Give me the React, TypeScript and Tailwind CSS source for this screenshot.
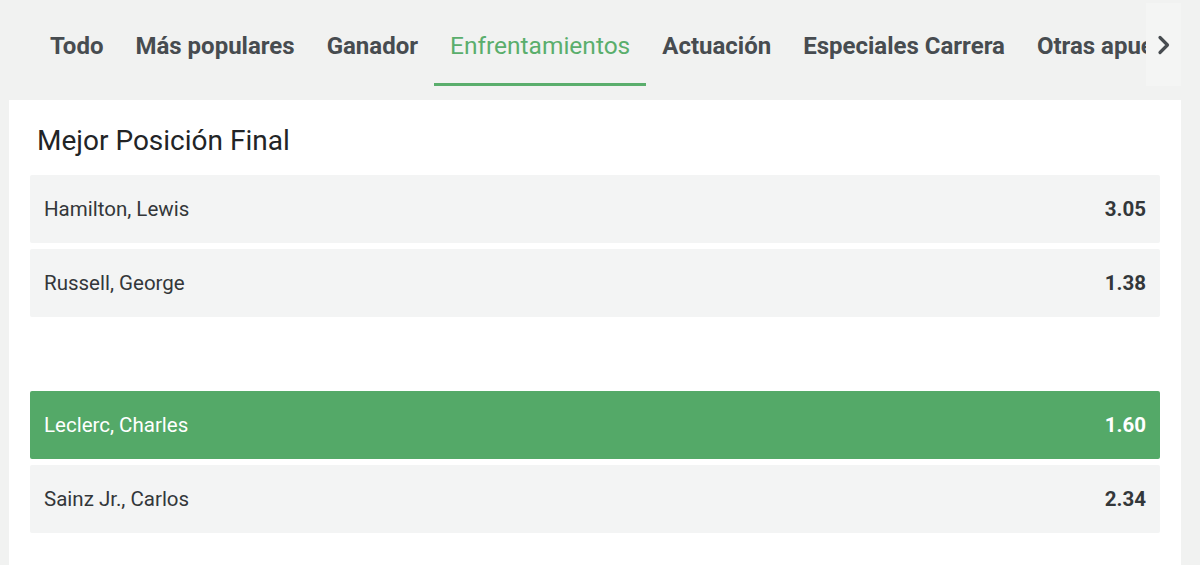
import React from "react";

const tabs = [
  "Todo",
  "Más populares",
  "Ganador",
  "Enfrentamientos",
  "Actuación",
  "Especiales Carrera",
  "Otras apuestas",
];

type Row = { name: string; odd: string; active?: boolean };

const group1: Row[] = [
  { name: "Hamilton, Lewis", odd: "3.05" },
  { name: "Russell, George", odd: "1.38" },
];
const group2: Row[] = [
  { name: "Leclerc, Charles", odd: "1.60", active: true },
  { name: "Sainz Jr., Carlos", odd: "2.34" },
];

function OddRow({ r }: { r: Row }) {
  return (
    <div
      className={
        r.active
          ? "flex h-[68px] items-center justify-between rounded-[2px] bg-[#54a968] px-[14px] text-white"
          : "flex h-[68px] items-center justify-between rounded-[2px] bg-[#f3f4f4] px-[14px] text-[#33373a]"
      }
    >
      <span className="text-[20.5px]">{r.name}</span>
      <span className="text-[20.5px] font-bold">{r.odd}</span>
    </div>
  );
}

export default function App() {
  return (
    <div
      className="h-[565px] w-[1200px] overflow-hidden bg-[#f1f2f1] pl-[9px] pr-[19px]"
      style={{ fontFamily: "Roboto, 'Noto Sans', sans-serif" }}
    >
      <div className="relative pt-[6px]">
        <div className="flex h-[80px] overflow-hidden pl-[25px] pr-[35px]">
          {tabs.map((t) => {
            const active = t === "Enfrentamientos";
            return (
              <div
                key={t}
                className={
                  active
                    ? "flex shrink-0 items-center border-b-[3px] border-[#5aae6c] px-4 pt-[3px] text-[24.5px] text-[#5aae6c]"
                    : "flex shrink-0 items-center border-b-[3px] border-transparent px-4 pt-[3px] text-[24px] font-bold text-[#474c50]"
                }
              >
                {t}
              </div>
            );
          })}
        </div>
        <div className="absolute right-0 top-[3px] flex h-[83px] w-[35px] items-center justify-center bg-[#f4f5f4]">
          <svg width="14" height="20" viewBox="0 0 14 20" fill="none">
            <path
              d="M3 2.5L10.5 10L3 17.5"
              stroke="#474c50"
              strokeWidth="3.2"
              strokeLinecap="round"
              strokeLinejoin="round"
            />
          </svg>
        </div>
      </div>
      <div className="mt-[14px] h-[600px] bg-white px-[21px] pt-[22px]">
        <h2 className="mb-[15px] pl-[7px] text-[28px] leading-[38px] text-[#222426]">
          Mejor Posición Final
        </h2>
        <div className="flex flex-col gap-[6px]">
          {group1.map((r) => (
            <OddRow key={r.name} r={r} />
          ))}
        </div>
        <div className="mt-[74px] flex flex-col gap-[6px]">
          {group2.map((r) => (
            <OddRow key={r.name} r={r} />
          ))}
        </div>
      </div>
    </div>
  );
}
